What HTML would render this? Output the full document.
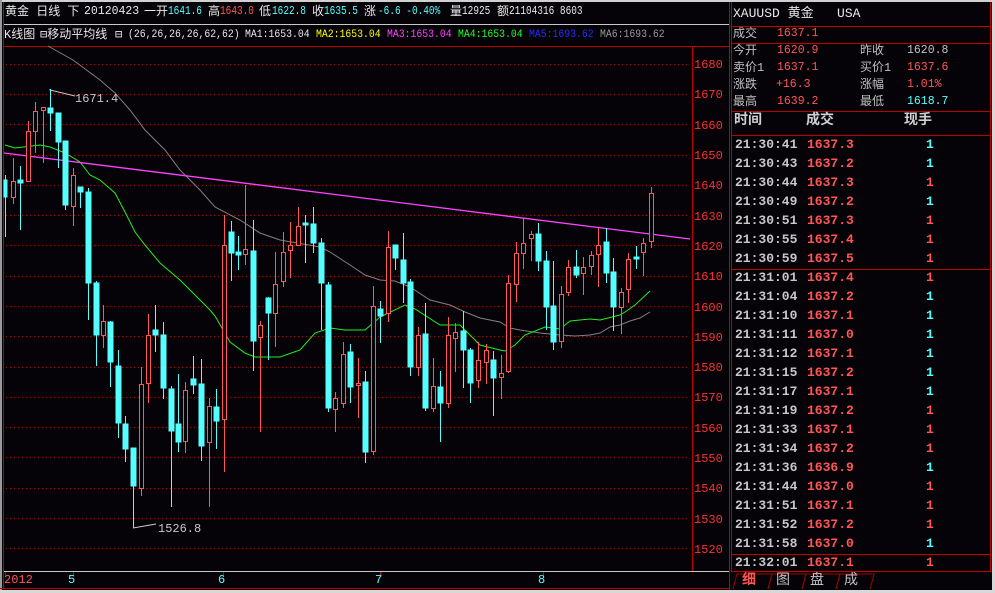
<!DOCTYPE html>
<html><head><meta charset="utf-8"><style>
*{margin:0;padding:0}
body{width:995px;height:593px;background:#050308;overflow:hidden;position:relative;font-family:"Liberation Mono","WenQuanYi Zen Hei","Noto Sans CJK SC",monospace;font-size:12px;color:#c0c0c0}
.a{position:absolute;white-space:pre;line-height:14px}
.s{position:absolute;white-space:pre;line-height:14px;font-size:11px;transform:scaleX(0.89);transform-origin:0 0}
.h{position:absolute;white-space:pre;line-height:14px;font-size:11.5px;transform:scaleX(0.82);transform-origin:0 0}
.k{position:absolute;white-space:pre;line-height:14px;font-size:12px}
.n{position:absolute;white-space:pre;line-height:14px;font-size:11.5px}
.r{color:#ff5656}.c{color:#55ffff}.w{color:#e8e8e8}.y{color:#ffff00}.m{color:#ff44ff}.g{color:#22ff22}.b{color:#2a2aff}.gr{color:#9a9a9a}
.t{position:absolute;font-weight:bold;font-size:13px;line-height:19px;white-space:pre}
</style></head><body>
<svg width="995" height="593" style="position:absolute;left:0;top:0">
<rect x="0" y="0" width="995" height="2" fill="#d0d0d0"/>
<rect x="0" y="0" width="2" height="593" fill="#9a9a9a"/>
<rect x="3" y="2" width="1" height="587" fill="#c00000"/>
<line x1="4" y1="24.5" x2="729" y2="24.5" stroke="#c8c8c8"/>
<line x1="4" y1="46.5" x2="729" y2="46.5" stroke="#c00000"/>
<line x1="692.5" y1="46" x2="692.5" y2="571" stroke="#c00000"/>
<line x1="4" y1="571.5" x2="729" y2="571.5" stroke="#c8c8c8"/>
<line x1="0" y1="588.5" x2="729" y2="588.5" stroke="#c00000"/>
<rect x="0" y="590" width="995" height="3" fill="#d8d8d8"/>
<line x1="729.5" y1="2" x2="729.5" y2="590" stroke="#c00000"/>
<line x1="731.5" y1="2" x2="731.5" y2="572" stroke="#c00000"/>
<line x1="990.5" y1="2" x2="990.5" y2="572" stroke="#c00000"/>
<rect x="992" y="0" width="3" height="593" fill="#d8d8d8"/>
<g stroke="#c00000">
<line x1="731" y1="26.5" x2="990" y2="26.5"/>
<line x1="731" y1="43.5" x2="990" y2="43.5"/>
<line x1="731" y1="111.5" x2="990" y2="111.5"/>
<line x1="732" y1="135.5" x2="990" y2="135.5"/>
<line x1="732" y1="269.5" x2="990" y2="269.5"/>
<line x1="732" y1="554.5" x2="990" y2="554.5"/>
<line x1="731" y1="571.5" x2="990" y2="571.5"/>
</g>
<g stroke="#c00000" stroke-dasharray="1 3">
<line x1="6" y1="64.5" x2="690" y2="64.5"/><line x1="6" y1="94.5" x2="690" y2="94.5"/><line x1="6" y1="124.5" x2="690" y2="124.5"/><line x1="6" y1="155.5" x2="690" y2="155.5"/><line x1="6" y1="185.5" x2="690" y2="185.5"/><line x1="6" y1="215.5" x2="690" y2="215.5"/><line x1="6" y1="245.5" x2="690" y2="245.5"/><line x1="6" y1="276.5" x2="690" y2="276.5"/><line x1="6" y1="306.5" x2="690" y2="306.5"/><line x1="6" y1="336.5" x2="690" y2="336.5"/><line x1="6" y1="367.5" x2="690" y2="367.5"/><line x1="6" y1="397.5" x2="690" y2="397.5"/><line x1="6" y1="427.5" x2="690" y2="427.5"/><line x1="6" y1="457.5" x2="690" y2="457.5"/><line x1="6" y1="488.5" x2="690" y2="488.5"/><line x1="6" y1="518.5" x2="690" y2="518.5"/><line x1="6" y1="548.5" x2="690" y2="548.5"/>
</g>
<g stroke="#c00000">
<line x1="5.5" y1="572" x2="5.5" y2="577"/><line x1="73.5" y1="572" x2="73.5" y2="577"/><line x1="223.5" y1="572" x2="223.5" y2="577"/><line x1="380.5" y1="572" x2="380.5" y2="577"/><line x1="543.5" y1="572" x2="543.5" y2="577"/>
</g>
<g font-family="Liberation Mono,monospace" font-size="12" fill="#ff3030">
<text x="694" y="68">1680</text><text x="694" y="98">1670</text><text x="694" y="129">1660</text><text x="694" y="159">1650</text><text x="694" y="189">1640</text><text x="694" y="220">1630</text><text x="694" y="250">1620</text><text x="694" y="280">1610</text><text x="694" y="311">1600</text><text x="694" y="341">1590</text><text x="694" y="371">1580</text><text x="694" y="401">1570</text><text x="694" y="432">1560</text><text x="694" y="462">1550</text><text x="694" y="492">1540</text><text x="694" y="523">1530</text><text x="694" y="553">1520</text>
</g>
<polyline fill="none" stroke="#808080" points="48,46 73,60 100,80 115,93 130,110 145,130 165,150 180,170 200,190 215,207 240,220 260,233 280,240 320,247 330,252 350,265 365,275 380,280 395,281 410,287 430,300 450,305 465,312 480,318 500,322 510,328 520,330 540,333 560,335 575,336 590,335 600,333 610,327 620,325 630,321 640,318 650,312"/>
<polyline fill="none" stroke="#22ee22" points="5,145 15,148 40,145 50,147 65,153 80,162 90,175 100,180 115,193 125,212 135,232 145,245 160,263 180,280 195,295 210,310 215,316 230,342 245,353 255,357 265,357 280,357 300,350 315,333 330,328 345,330 365,330 380,317 405,305 415,309 440,325 460,325 480,345 500,350 505,351 515,345 525,335 545,327 560,329 570,321 590,319 600,320 620,315 625,312 635,305 650,291"/>
<line x1="4" y1="153" x2="690" y2="239" stroke="#ff44ff" stroke-width="1.3"/>
<polyline fill="none" stroke="#c8c8c8" points="50,89 50,90 75,96"/>
<polyline fill="none" stroke="#c8c8c8" points="133,528 156,524"/>
<g>
<g stroke="#55ffff" fill="#55ffff">
<line x1="5.5" y1="175" x2="5.5" y2="237"/><rect x="4" y="180" width="3" height="17"/>
<line x1="20.5" y1="166" x2="20.5" y2="230"/><rect x="18" y="180" width="5" height="3"/>
<line x1="50.5" y1="89" x2="50.5" y2="131"/><rect x="48" y="108" width="5" height="5"/>
<line x1="58.5" y1="113" x2="58.5" y2="168"/><rect x="56" y="113" width="5" height="29"/>
<line x1="65.5" y1="141" x2="65.5" y2="210"/><rect x="63" y="141" width="5" height="64"/>
<line x1="80.5" y1="187" x2="80.5" y2="208"/><rect x="78" y="187" width="5" height="5"/>
<line x1="88.5" y1="188" x2="88.5" y2="320"/><rect x="86" y="192" width="5" height="91"/>
<line x1="96.5" y1="281" x2="96.5" y2="366"/><rect x="94" y="283" width="5" height="52"/>
<line x1="110.5" y1="321" x2="110.5" y2="387"/><rect x="108" y="322" width="5" height="40"/>
<line x1="118.5" y1="350" x2="118.5" y2="438"/><rect x="116" y="366" width="5" height="57"/>
<line x1="125.5" y1="416" x2="125.5" y2="462"/><rect x="123" y="424" width="5" height="25"/>
<line x1="133.5" y1="448" x2="133.5" y2="528"/><rect x="131" y="448" width="5" height="38"/>
<line x1="155.5" y1="305" x2="155.5" y2="352"/><rect x="153" y="330" width="5" height="5"/>
<line x1="163.5" y1="322" x2="163.5" y2="399"/><rect x="161" y="335" width="5" height="53"/>
<line x1="171.5" y1="386" x2="171.5" y2="507"/><rect x="169" y="389" width="5" height="42"/>
<line x1="178.5" y1="374" x2="178.5" y2="452"/><rect x="176" y="424" width="5" height="18"/>
<line x1="193.5" y1="356" x2="193.5" y2="394"/><rect x="191" y="379" width="5" height="6"/>
<line x1="201.5" y1="359" x2="201.5" y2="461"/><rect x="199" y="384" width="5" height="62"/>
<line x1="216.5" y1="389" x2="216.5" y2="449"/><rect x="214" y="407" width="5" height="14"/>
<line x1="231.5" y1="221" x2="231.5" y2="281"/><rect x="229" y="232" width="5" height="21"/>
<line x1="238.5" y1="236" x2="238.5" y2="270"/><rect x="236" y="252" width="5" height="3"/>
<line x1="253.5" y1="220" x2="253.5" y2="371"/><rect x="251" y="251" width="5" height="90"/>
<line x1="268.5" y1="297" x2="268.5" y2="360"/><rect x="266" y="298" width="5" height="15"/>
<line x1="305.5" y1="215" x2="305.5" y2="263"/><rect x="303" y="223" width="5" height="2"/>
<line x1="313.5" y1="207" x2="313.5" y2="253"/><rect x="311" y="224" width="5" height="19"/>
<line x1="321.5" y1="238" x2="321.5" y2="330"/><rect x="319" y="243" width="5" height="40"/>
<line x1="328.5" y1="282" x2="328.5" y2="412"/><rect x="326" y="285" width="5" height="123"/>
<line x1="350.5" y1="344" x2="350.5" y2="403"/><rect x="348" y="352" width="5" height="35"/>
<line x1="365.5" y1="371" x2="365.5" y2="463"/><rect x="363" y="382" width="5" height="70"/>
<line x1="380.5" y1="301" x2="380.5" y2="343"/><rect x="378" y="309" width="5" height="7"/>
<line x1="395.5" y1="245" x2="395.5" y2="270"/><rect x="393" y="245" width="5" height="13"/>
<line x1="403.5" y1="233" x2="403.5" y2="303"/><rect x="401" y="260" width="5" height="23"/>
<line x1="410.5" y1="279" x2="410.5" y2="376"/><rect x="408" y="282" width="5" height="85"/>
<line x1="425.5" y1="303" x2="425.5" y2="411"/><rect x="423" y="334" width="5" height="74"/>
<line x1="440.5" y1="371" x2="440.5" y2="442"/><rect x="438" y="387" width="5" height="16"/>
<line x1="463.5" y1="311" x2="463.5" y2="388"/><rect x="461" y="331" width="5" height="19"/>
<line x1="470.5" y1="348" x2="470.5" y2="403"/><rect x="468" y="350" width="5" height="33"/>
<line x1="493.5" y1="351" x2="493.5" y2="416"/><rect x="491" y="360" width="5" height="18"/>
<line x1="538.5" y1="223" x2="538.5" y2="271"/><rect x="536" y="234" width="5" height="27"/>
<line x1="546.5" y1="251" x2="546.5" y2="330"/><rect x="544" y="261" width="5" height="46"/>
<line x1="553.5" y1="261" x2="553.5" y2="350"/><rect x="551" y="306" width="5" height="36"/>
<line x1="576.5" y1="250" x2="576.5" y2="278"/><rect x="574" y="267" width="5" height="8"/>
<line x1="606.5" y1="228" x2="606.5" y2="283"/><rect x="604" y="242" width="5" height="31"/>
<line x1="613.5" y1="258" x2="613.5" y2="331"/><rect x="611" y="272" width="5" height="35"/>
<line x1="636.5" y1="246" x2="636.5" y2="269"/><rect x="634" y="257" width="5" height="2"/>
</g>
<g stroke="#ff5656" fill="#050308">
<line x1="13.5" y1="158" x2="13.5" y2="204"/><rect x="11.5" y="181.5" width="4" height="16"/>
<line x1="28.5" y1="121" x2="28.5" y2="181"/><rect x="26.5" y="131.5" width="4" height="50"/>
<line x1="35.5" y1="102" x2="35.5" y2="153"/><rect x="33.5" y="111.5" width="4" height="20"/>
<line x1="43.5" y1="107" x2="43.5" y2="163"/><rect x="41.5" y="107.5" width="4" height="3"/>
<line x1="73.5" y1="168" x2="73.5" y2="226"/><rect x="71.5" y="175.5" width="4" height="31"/>
<line x1="103.5" y1="305" x2="103.5" y2="348"/><rect x="101.5" y="321.5" width="4" height="14"/>
<line x1="141.5" y1="367" x2="141.5" y2="496"/><rect x="139.5" y="384.5" width="4" height="104"/>
<line x1="148.5" y1="314" x2="148.5" y2="403"/><rect x="146.5" y="335.5" width="4" height="48"/>
<line x1="185.5" y1="382" x2="185.5" y2="453"/><rect x="183.5" y="390.5" width="4" height="51"/>
<line x1="209.5" y1="398" x2="209.5" y2="507"/><rect x="207.5" y="406.5" width="4" height="36"/>
<line x1="224.5" y1="215" x2="224.5" y2="472"/><rect x="222.5" y="245.5" width="4" height="174"/>
<line x1="245.5" y1="185" x2="245.5" y2="265"/><rect x="243.5" y="249.5" width="4" height="5"/>
<line x1="260.5" y1="321" x2="260.5" y2="432"/><rect x="258.5" y="325.5" width="4" height="12"/>
<line x1="275.5" y1="252" x2="275.5" y2="347"/><rect x="273.5" y="284.5" width="4" height="29"/>
<line x1="283.5" y1="232" x2="283.5" y2="287"/><rect x="281.5" y="252.5" width="4" height="29"/>
<line x1="290.5" y1="222" x2="290.5" y2="278"/><rect x="288.5" y="245.5" width="4" height="5"/>
<line x1="298.5" y1="207" x2="298.5" y2="245"/><rect x="296.5" y="226.5" width="4" height="19"/>
<line x1="335.5" y1="392" x2="335.5" y2="432"/><rect x="333.5" y="398.5" width="4" height="11"/>
<line x1="343.5" y1="342" x2="343.5" y2="408"/><rect x="341.5" y="354.5" width="4" height="49"/>
<line x1="358.5" y1="358" x2="358.5" y2="418"/><rect x="356.5" y="383.5" width="4" height="2"/>
<line x1="373.5" y1="286" x2="373.5" y2="455"/><rect x="371.5" y="306.5" width="4" height="145"/>
<line x1="388.5" y1="231" x2="388.5" y2="322"/><rect x="386.5" y="247.5" width="4" height="66"/>
<line x1="418.5" y1="327" x2="418.5" y2="376"/><rect x="416.5" y="335.5" width="4" height="32"/>
<line x1="433.5" y1="358" x2="433.5" y2="412"/><rect x="431.5" y="386.5" width="4" height="22"/>
<line x1="448.5" y1="317" x2="448.5" y2="408"/><rect x="446.5" y="335.5" width="4" height="68"/>
<line x1="455.5" y1="323" x2="455.5" y2="372"/><rect x="453.5" y="332.5" width="4" height="6"/>
<line x1="478.5" y1="342" x2="478.5" y2="388"/><rect x="476.5" y="360.5" width="4" height="20"/>
<line x1="486.5" y1="344" x2="486.5" y2="384"/><rect x="484.5" y="350.5" width="4" height="12"/>
<line x1="501.5" y1="355" x2="501.5" y2="399"/><rect x="499.5" y="373.5" width="4" height="4"/>
<line x1="508.5" y1="275" x2="508.5" y2="373"/><rect x="506.5" y="283.5" width="4" height="88"/>
<line x1="516.5" y1="242" x2="516.5" y2="302"/><rect x="514.5" y="253.5" width="4" height="31"/>
<line x1="523.5" y1="218" x2="523.5" y2="269"/><rect x="521.5" y="243.5" width="4" height="10"/>
<line x1="531.5" y1="231" x2="531.5" y2="261"/><rect x="529.5" y="234.5" width="4" height="4"/>
<line x1="561.5" y1="286" x2="561.5" y2="348"/><rect x="559.5" y="294.5" width="4" height="47"/>
<line x1="568.5" y1="260" x2="568.5" y2="296"/><rect x="566.5" y="267.5" width="4" height="25"/>
<line x1="583.5" y1="257" x2="583.5" y2="295"/><rect x="581.5" y="267.5" width="4" height="6"/>
<line x1="591.5" y1="251" x2="591.5" y2="275"/><rect x="589.5" y="255.5" width="4" height="11"/>
<line x1="598.5" y1="228" x2="598.5" y2="287"/><rect x="596.5" y="245.5" width="4" height="9"/>
<line x1="621.5" y1="288" x2="621.5" y2="334"/><rect x="619.5" y="292.5" width="4" height="15"/>
<line x1="628.5" y1="253" x2="628.5" y2="303"/><rect x="626.5" y="259.5" width="4" height="30"/>
<line x1="643.5" y1="238" x2="643.5" y2="276"/><rect x="641.5" y="243.5" width="4" height="9"/>
<line x1="651.5" y1="187" x2="651.5" y2="248"/><rect x="649.5" y="193.5" width="4" height="48"/>
</g>
</g>
<g fill="none" stroke="#a00000">
<polyline points="733,589 737,574 772,574 768,589"/>
<polyline points="768,589 772,574 806,574 802,589"/>
<polyline points="802,589 806,574 840,574 836,589"/>
<polyline points="836,589 840,574 874,574 870,589"/>
</g>
</svg>
<!-- header -->
<div class="k w" style="left:5px;top:5px">黄金 日线 下</div>
<div class="n w" style="left:84px;top:5px">20120423</div>
<div class="k w" style="left:144px;top:5px">一</div>
<div class="k w" style="left:156px;top:5px">开</div>
<div class="h c" style="left:168px;top:5px">1641.6</div>
<div class="k w" style="left:208px;top:5px">高</div>
<div class="h r" style="left:220px;top:5px">1643.0</div>
<div class="k w" style="left:259px;top:5px">低</div>
<div class="h c" style="left:272px;top:5px">1622.8</div>
<div class="k w" style="left:312px;top:5px">收</div>
<div class="h c" style="left:324px;top:5px">1635.5</div>
<div class="k w" style="left:364px;top:5px">涨</div>
<div class="h c" style="left:378px;top:5px">-6.6 -0.40%</div>
<div class="k w" style="left:450px;top:5px">量</div>
<div class="h w" style="left:462px;top:5px">12925</div>
<div class="k w" style="left:497px;top:5px">额</div>
<div class="h w" style="left:509px;top:5px">21104316 8603</div>
<!-- MA row -->
<div class="k w" style="left:4px;top:28px">K线图</div>
<div class="k w" style="left:40px;top:28px">⊟移动平均线</div>
<div class="k w" style="left:115px;top:28px">⊟</div>
<div class="s w" style="left:128px;top:28px">(26,26,26,26,62,62)</div>
<div class="s w" style="left:245px;top:28px">MA1:1653.04</div>
<div class="s y" style="left:316px;top:28px">MA2:1653.04</div>
<div class="s m" style="left:387px;top:28px">MA3:1653.04</div>
<div class="s g" style="left:458px;top:28px">MA4:1653.04</div>
<div class="s b" style="left:529px;top:28px">MA5:1693.62</div>
<div class="s gr" style="left:600px;top:28px">MA6:1693.62</div>
<div class="a" style="left:75px;top:92px;color:#c8c8c8">1671.4</div>
<div class="a" style="left:158px;top:522px;color:#c8c8c8">1526.8</div>
<div class="a r" style="left:4px;top:573px">2012</div>
<div class="a c" style="left:68px;top:573px">5</div>
<div class="a c" style="left:218px;top:573px">6</div>
<div class="a c" style="left:375px;top:573px">7</div>
<div class="a c" style="left:538px;top:573px">8</div>
<!-- right quote panel -->
<div class="a w" style="left:733px;top:7px;font-size:13px">XAUUSD 黄金   USA</div>
<div class="k" style="left:733px;top:27px">成交</div><div class="n r" style="left:777px;top:27px">1637.1</div>
<div class="k" style="left:733px;top:44px">今开</div><div class="n r" style="left:777px;top:44px">1620.9</div>
<div class="k" style="left:860px;top:44px">昨收</div><div class="n" style="left:907px;top:44px">1620.8</div>
<div class="k" style="left:733px;top:61px">卖价1</div><div class="n r" style="left:777px;top:61px">1637.1</div>
<div class="k" style="left:860px;top:61px">买价1</div><div class="n r" style="left:907px;top:61px">1637.6</div>
<div class="k" style="left:733px;top:78px">涨跌</div><div class="n r" style="left:776px;top:78px">+16.3</div>
<div class="k" style="left:860px;top:78px">涨幅</div><div class="n r" style="left:907px;top:78px">1.01%</div>
<div class="k" style="left:733px;top:95px">最高</div><div class="n r" style="left:777px;top:95px">1639.2</div>
<div class="k" style="left:860px;top:95px">最低</div><div class="n c" style="left:907px;top:95px">1618.7</div>
<div class="t" style="left:734px;top:112px;color:#d0d0d0;font-size:14px">时间</div>
<div class="t" style="left:806px;top:112px;color:#d0d0d0;font-size:14px">成交</div>
<div class="t" style="left:904px;top:112px;color:#d0d0d0;font-size:14px">现手</div>
<div class="t" style="left:735px;top:134.5px;color:#c8c8c8">21:30:41<br>21:30:43<br>21:30:44<br>21:30:49<br>21:30:51<br>21:30:55<br>21:30:59</div>
<div class="t r" style="left:807px;top:134.5px">1637.3<br>1637.2<br>1637.3<br>1637.2<br>1637.3<br>1637.4<br>1637.5</div>
<div class="t" style="left:926px;top:134.5px"><span class="c">1</span><br><span class="c">1</span><br><span class="r">1</span><br><span class="c">1</span><br><span class="r">1</span><br><span class="r">1</span><br><span class="r">1</span></div>
<div class="t" style="left:735px;top:267.5px;color:#c8c8c8">21:31:01<br>21:31:04<br>21:31:10<br>21:31:11<br>21:31:12<br>21:31:15<br>21:31:17<br>21:31:19<br>21:31:33<br>21:31:34<br>21:31:36<br>21:31:44<br>21:31:51<br>21:31:52<br>21:31:58</div>
<div class="t r" style="left:807px;top:267.5px">1637.4<br>1637.2<br>1637.1<br>1637.0<br>1637.1<br>1637.2<br>1637.1<br>1637.2<br>1637.1<br>1637.2<br>1636.9<br>1637.0<br>1637.1<br>1637.2<br>1637.0</div>
<div class="t" style="left:926px;top:267.5px"><span class="r">1</span><br><span class="c">1</span><br><span class="c">1</span><br><span class="c">1</span><br><span class="c">1</span><br><span class="c">1</span><br><span class="c">1</span><br><span class="r">1</span><br><span class="r">1</span><br><span class="r">1</span><br><span class="c">1</span><br><span class="r">1</span><br><span class="r">1</span><br><span class="r">1</span><br><span class="c">1</span></div>
<div class="t" style="left:735px;top:552.5px;color:#c8c8c8">21:32:01</div>
<div class="t r" style="left:807px;top:552.5px">1637.1</div>
<div class="t r" style="left:926px;top:552.5px">1</div>
<div class="a r" style="left:742px;top:573px;font-size:14px;font-weight:bold;line-height:16px">细</div>
<div class="a" style="left:776px;top:573px;font-size:14px;line-height:16px">图</div>
<div class="a" style="left:810px;top:573px;font-size:14px;line-height:16px">盘</div>
<div class="a" style="left:844px;top:573px;font-size:14px;line-height:16px">成</div>
</body></html>
